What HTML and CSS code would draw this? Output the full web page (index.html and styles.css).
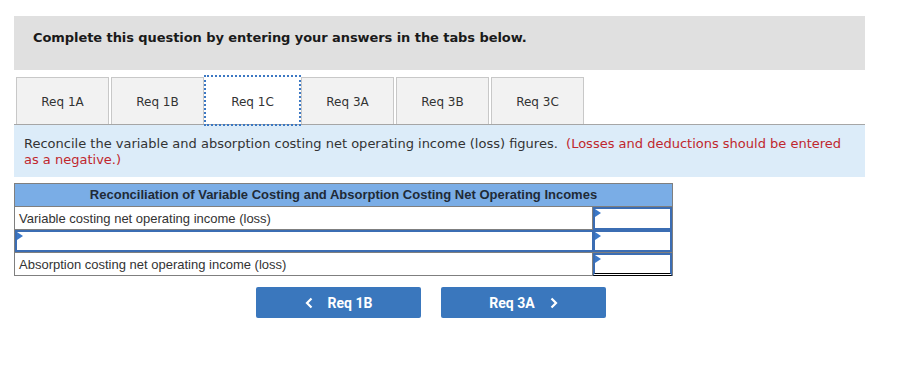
FILE: index.html
```html
<!DOCTYPE html>
<html>
<head>
<meta charset="utf-8">
<link rel="stylesheet" href="styles.css">
</head>
<body>
<div class="page">
  <div class="instr">Complete this question by entering your answers in the tabs below.</div>
  <div class="tabs">
    <div class="tab">Req 1A</div>
    <div class="tab">Req 1B</div>
    <div class="tab active">Req 1C</div>
    <div class="tab">Req 3A</div>
    <div class="tab">Req 3B</div>
    <div class="tab">Req 3C</div>
  </div>
  <div class="panel">Reconcile the variable and absorption costing net operating income (loss) figures.&nbsp; <span class="note">(Losses and deductions should be entered</span><br><span class="note">as a negative.)</span></div>
  <div class="table">
    <div class="thead">Reconciliation of Variable Costing and Absorption Costing Net Operating Incomes</div>
    <div class="row">
      <div class="label">Variable costing net operating income (loss)</div>
      <div class="inp"><span class="flag"></span></div>
    </div>
    <div class="row">
      <div class="inp wide"><span class="flag"></span></div>
      <div class="inp"><span class="flag"></span></div>
    </div>
    <div class="row last">
      <div class="label">Absorption costing net operating income (loss)</div>
      <div class="inp total"><span class="flag"></span></div>
    </div>
  </div>
  <div class="nav">
    <div class="btn"><svg class="chev" width="8" height="12" viewBox="0 0 8 12"><path d="M6.5 1.5 L2 6 L6.5 10.5" fill="none" stroke="#fff" stroke-width="2.2"/></svg><span>Req 1B</span></div>
    <div class="btn"><span>Req 3A</span><svg class="chev" width="8" height="12" viewBox="0 0 8 12"><path d="M1.5 1.5 L6 6 L1.5 10.5" fill="none" stroke="#fff" stroke-width="2.2"/></svg></div>
  </div>
</div>
</body>
</html>
```

FILE: styles.css
```css
* { box-sizing: border-box; }
html, body { margin: 0; padding: 0; background: #fff; }
.page {
  padding: 16px 0 0 14px;
  width: 865px;
  font-family: "DejaVu Sans", Verdana, sans-serif;
  color: #222;
}
.instr {
  height: 54px;
  background: #e0e0e0;
  padding: 14px 0 0 19px;
  font-weight: bold;
  font-size: 13px;
  line-height: 16px;
  letter-spacing: -0.07px;
  color: #1a1a1a;
}
.tabs {
  display: flex;
  gap: 2px;
  margin-top: 7px;
  padding-left: 2px;
  height: 47px;
}
.tab {
  width: 93px;
  height: 47px;
  background: #f2f2f2;
  border: 1px solid #c8c8c8;
  border-bottom: none;
  display: flex;
  align-items: center;
  justify-content: center;
  padding-top: 1px;
  font-size: 12px;
  color: #333;
}
.tab.active {
  background: #fff;
  outline: 2px dotted #3c78c3;
  outline-offset: 0;
  border-color: #fff;
}
.panel {
  background: #dcecf9;
  border-top: 1px solid #a6a6a6;
  padding: 11px 10px 9px 10px;
  font-size: 13px;
  line-height: 16px;
  color: #333;
}
.note { color: #c0272d; }
.table {
  margin-top: 6px;
  width: 659px;
  border: 1px solid #7f7f7f;
  border-bottom: none;
  font-family: "Liberation Sans", Arial, sans-serif;
  font-size: 13px;
  color: #222;
}
.thead {
  height: 23px;
  background: #7aade6;
  border-bottom: 1px solid #7f7f7f;
  font-weight: bold;
  text-align: center;
  line-height: 22px;
  color: #1f2a36;
}
.row {
  display: grid;
  grid-template-columns: 1fr 79px;
  height: 23px;
  border-bottom: 1px solid #7f7f7f;
}
.label {
  padding-left: 4px;
  line-height: 23px;
  border-right: 1px solid #7f7f7f;
  color: #333;
}
.inp {
  position: relative;
  border: 2px solid #3b6db3;
  background: #fff;
}
.inp.wide { border-right-width: 1px; }
.inp.total { border-bottom: 3px double #000; }
.flag {
  position: absolute;
  left: 0;
  top: 0;
  width: 0;
  height: 0;
  border-top: 4px solid transparent;
  border-bottom: 4px solid transparent;
  border-left: 6px solid #3b78c8;
}
.nav {
  display: flex;
  gap: 20px;
  margin-top: 11px;
  padding-left: 242px;
}
.btn {
  width: 165px;
  height: 31px;
  background: #3a77bd;
  border-radius: 2px;
  display: flex;
  align-items: center;
  justify-content: center;
  gap: 15px;
  color: #fff;
  font-family: Roboto, "Liberation Sans", sans-serif;
  font-weight: bold;
  font-size: 14px;
}
.chev { display: block; }
```
